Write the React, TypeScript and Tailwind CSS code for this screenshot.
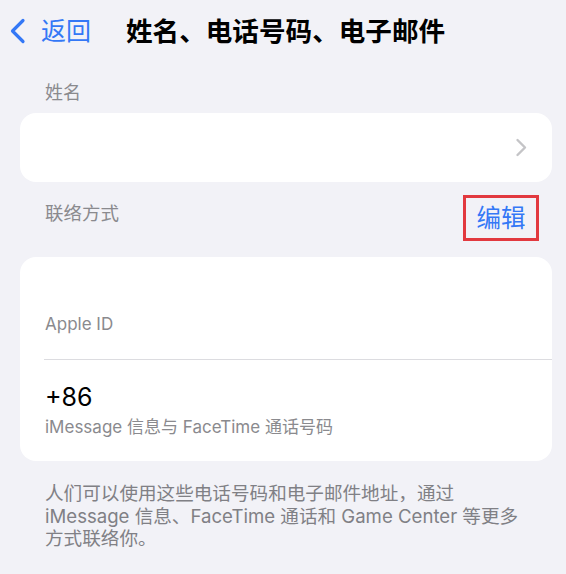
import React from 'react';

const FONT = 'Inter, "Noto Sans CJK SC", sans-serif';

function BackChevron() {
  return (
    <svg width="19" height="26" viewBox="0 0 19 26" fill="none">
      <path d="M15 2.5L4.5 13L15 23.5" stroke="#3478f6" strokeWidth="3.2" strokeLinecap="round" strokeLinejoin="round" />
    </svg>
  );
}

function RowChevron() {
  return (
    <svg width="13" height="19" viewBox="0 0 13 19" fill="none">
      <path d="M2.5 2L10 9.5L2.5 17" stroke="#c4c4c7" strokeWidth="2.4" strokeLinecap="round" strokeLinejoin="round" />
    </svg>
  );
}

export default function App() {
  return (
    <div className="w-full h-[574px] overflow-hidden bg-[#f2f2f7]" style={{ fontFamily: FONT }}>
      {/* nav bar */}
      <header className="h-[62px] flex items-center">
        <div className="w-[126px] flex items-center pl-[8px]">
          <BackChevron />
          <span className="ml-[14px] text-[25px] leading-none text-[#3478f6]">返回</span>
        </div>
        <h1 className="text-[26.6px] leading-none font-bold text-black">姓名、电话号码、电子邮件</h1>
      </header>

      <div className="pl-[20px] pr-[14px]">
        <p className="mt-[19px] pl-[25px] text-[18px] leading-[24px] text-[#8a8a8e]">姓名</p>
        <div className="mt-[8px] h-[69px] rounded-[16px] bg-white flex items-center justify-end pr-[24px]">
          <RowChevron />
        </div>

        <div className="mt-[13px] flex items-start justify-between">
          <p className="pt-[6px] pl-[25px] text-[18.5px] leading-[24px] text-[#8a8a8e]">联络方式</p>
          <div className="mr-[13px] w-[76px] h-[46px] border-[3px] border-[#e2393f] flex items-center justify-center">
            <span className="text-[24.5px] leading-none text-[#3478f6]">编辑</span>
          </div>
        </div>

        <div className="mt-[16px] rounded-[16px] bg-white pt-[55px] pb-[22px]">
          <p className="pl-[25px] text-[17px] leading-[24px] text-[#8a8a8e]">Apple ID</p>
          <div className="mt-[23px] ml-[24px] h-px bg-[#dcdce0]" />
          <p className="mt-[22px] pl-[25px] text-[25px] leading-[30px] text-black">+86</p>
          <p className="mt-[3px] pl-[25px] text-[17px] leading-[24px] text-[#8a8a8e]">
            iMessage 信息与 FaceTime 通话号码
          </p>
        </div>

        <div className="mt-[21px] pl-[25px] text-[18.6px] leading-[22.5px] text-[#808085]">
          <p>人们可以使用这些电话号码和电子邮件地址，通过</p>
          <p>iMessage 信息、FaceTime 通话和 Game Center 等更多</p>
          <p>方式联络你。</p>
        </div>
      </div>
    </div>
  );
}
